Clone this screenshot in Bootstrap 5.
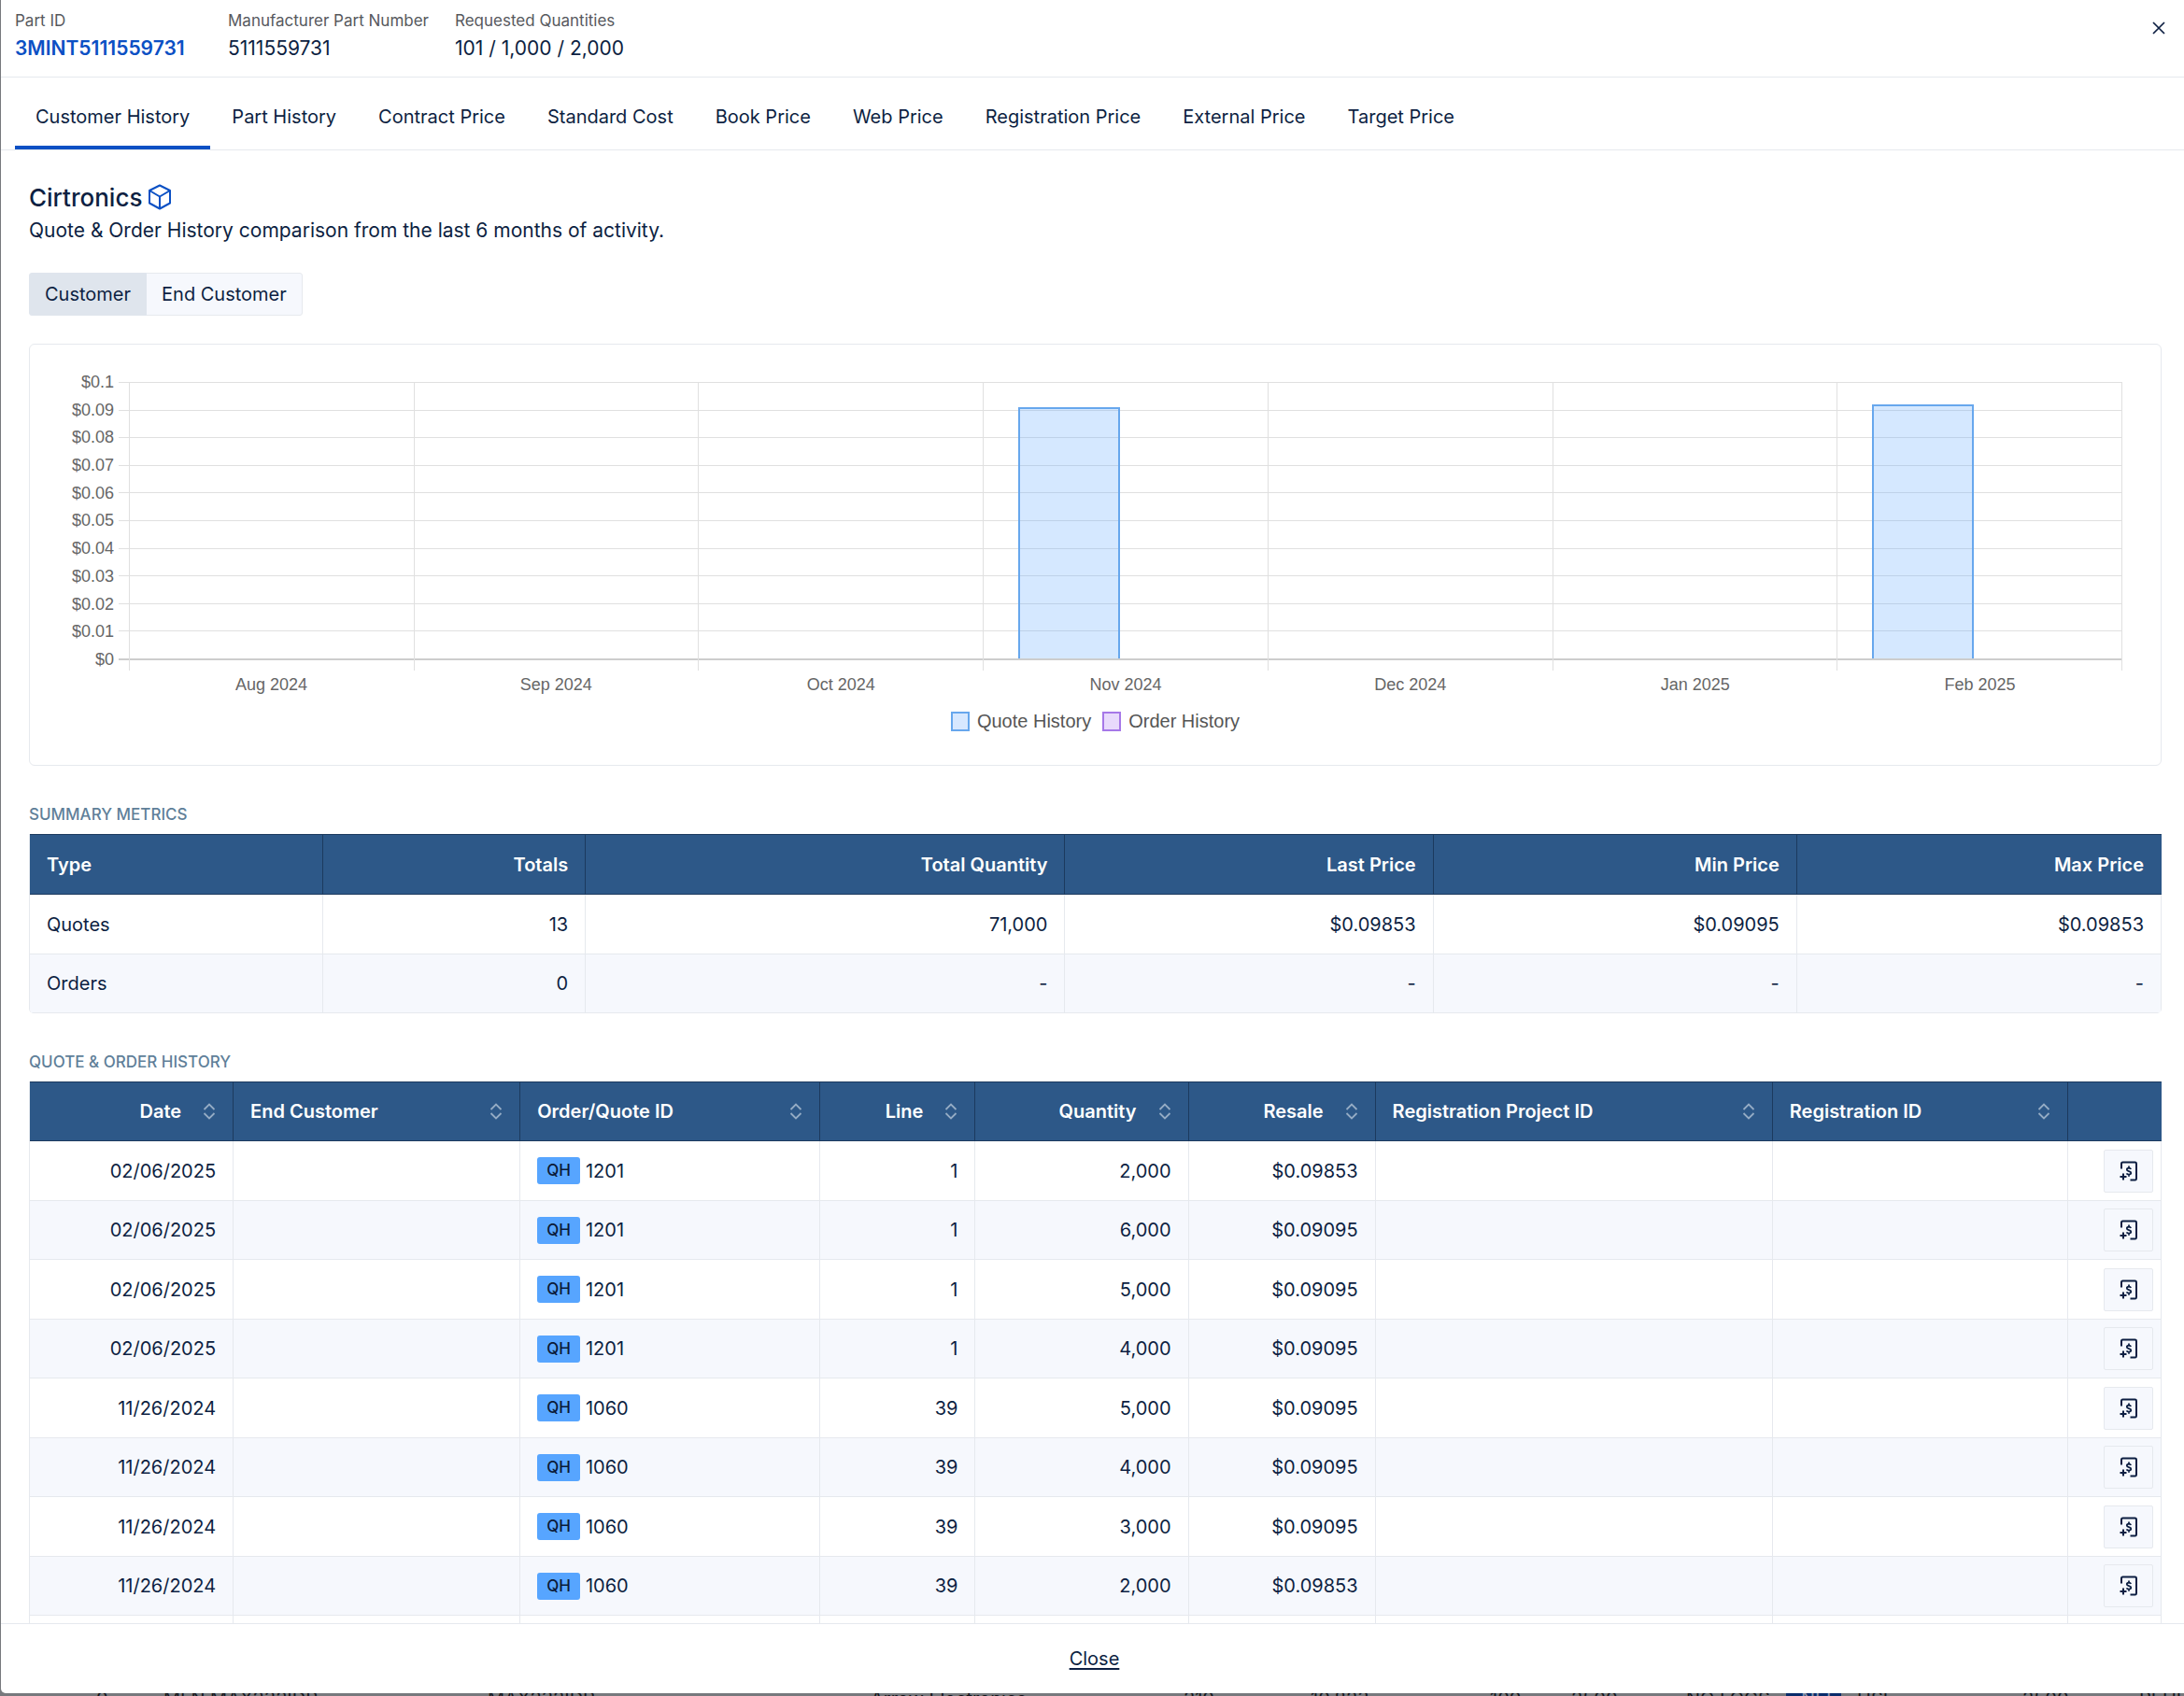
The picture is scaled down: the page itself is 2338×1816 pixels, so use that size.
<!DOCTYPE html>
<html lang="en">
<head>
<meta charset="utf-8">
<meta name="viewport" content="width=device-width, initial-scale=1">
<title>Part pricing history</title>
<link href="https://cdn.jsdelivr.net/npm/bootstrap@5.3.0/dist/css/bootstrap.min.css" rel="stylesheet">
<style>
:root { --ink: #0d1f42; --line: #e6e9ee; --accent: #0b50c4; --zebra: #f6f8fd; --head: #2d5888; --head-line: #1c3a5e; }
body { font-family: Inter, "Liberation Sans", sans-serif; font-size: 20px; line-height: 30px; color: var(--ink); background: #77797d; }
.dialog-shell { background: #fff; margin-left: 1px; border-bottom-left-radius: 5px; min-height: 0; }
.part-head { padding: 7px 15px 15px; gap: 28px; border-bottom: 1px solid var(--line); }
.part-head dl:first-child { min-width: 200px; }
.part-head dt { font-size: 17px; font-weight: 400; color: #57595e; }
.part-head dd { margin: 0; font-size: 21px; }
.part-head a { color: var(--accent); font-weight: 600; text-decoration: none; }
.x-btn { padding: 0; border: 0; background: none; width: 24px; height: 42px; color: var(--ink); }
.price-tabs { padding: 0 15px; gap: 1px; border-bottom: 1px solid var(--line); }
.price-tabs .nav-link { color: var(--ink); padding: 27px 22px 16px; border-bottom: 4px solid transparent; }
.price-tabs .nav-link.active { border-bottom-color: var(--accent); }
.history-body { padding: 32px 24px 0 30px; min-height: 0; overflow-y: auto; scrollbar-width: none; }
.history-body::-webkit-scrollbar { display: none; }
.cust-name { font-size: 26px; line-height: 38px; font-weight: 500; gap: 6px; margin: 0; }
.cust-name svg { margin-bottom: 2px; }
.cust-note { font-size: 21px; line-height: 31px; margin: 0; }
.scope-toggle { margin: 30px 0; }
.scope-toggle .btn { --bs-btn-color: var(--ink); --bs-btn-bg: var(--zebra); --bs-btn-border-color: var(--line); --bs-btn-active-bg: #dfe5ed; --bs-btn-active-color: var(--ink); --bs-btn-active-border-color: #dfe5ed; --bs-btn-border-radius: 3px; font-size: 20px; line-height: 30px; padding: 7px 16px; }
.chart-card { border: 1px solid var(--line); border-radius: 6px; padding: 30px 41px 31px 45px; font-family: "Liberation Sans", Arial, sans-serif; color: #666; margin-bottom: 34px; }
.y-axis { font-size: 18px; line-height: 20px; height: 317px; text-align: right; padding-right: 5px; }
.plot { display: grid; padding-top: 10px; }
.plot > div { grid-area: 1 / 1; }
.plot-rows { height: 298px; border-bottom: 2px solid #cdcdcd; }
.plot-rows div { border-top: 1px solid #e0e0e0; }
.plot-cols { margin-left: 11px; height: 309px; border-right: 1px solid #e0e0e0; }
.plot-cols .month { border-left: 1px solid #e0e0e0; padding-bottom: 13px; flex: 1 1 0; }
.bar { width: 36%; margin-left: 12%; background: rgba(87,165,255,.25); border: 2px solid #67a7ed; border-bottom: 0; }
.months { margin-left: 11px; font-size: 18px; line-height: 30px; text-align: center; }
.months span { flex: 1 1 0; }
.legend-row { font-size: 20px; line-height: 30px; gap: 12px; padding: 9px 4px 1px 0; color: #555; }
.swatch { width: 20px; height: 21px; border: 2px solid #67a7ed; background: #d7e8ff; }
.swatch.order-hist { border-color: #a678e8; background: #e8dafc; }
.caption-line { font-size: 17px; line-height: 36px; font-weight: 500; color: #5f7f99; margin: 0 0 3px; text-transform: uppercase; }
.grid-table { table-layout: fixed; width: 100%; border-collapse: separate; border-spacing: 0; border-left: 1px solid var(--line); border-bottom-left-radius: 5px; border-bottom-right-radius: 5px; overflow: hidden; margin-bottom: 34px; }
.grid-table th { background: var(--head); color: #fff; font-weight: 600; padding: 0 18px; height: 65px; border: solid var(--head-line); border-width: 1px 1px 1px 0; }
.grid-table th:last-child { border-right-color: var(--head); }
.grid-table td { padding: 0 18px; border: solid var(--line); border-width: 0 1px 1px 0; height: 63px; }
.grid-table tr:nth-child(odd) td { height: 64px; }
.grid-table tr:nth-child(even) td { background: var(--zebra); }
.history-grid th { height: 64px; }
.history-grid .sort { background: none; border: 0; color: inherit; font-weight: inherit; padding: 0; width: 100%; display: flex; align-items: center; justify-content: space-between; }
.history-grid .sort svg { color: #94abc4; }
.history-grid .num-col .sort { justify-content: flex-end; gap: 23px; }
.quote-tag { background: #57a5ff; color: #0b1a38; font-size: 17px; font-weight: 500; line-height: 21px; padding: 4px 10px; border-radius: 3px; margin-right: 6px; }
.grid-table .act { padding: 0 8px; }
.copy-btn { width: 53px; height: 46px; border: 1px solid var(--line); background: var(--zebra); padding: 0; color: var(--ink); border-radius: 2px; }
.dialog-foot { border-top: 1px solid var(--line); height: 79px; padding-left: 4px; }
.dialog-foot .btn { color: var(--ink); font-size: 20px; line-height: 30px; text-decoration: underline; padding: 0; text-underline-offset: 3px; text-decoration-thickness: 2px; }
.backdrop-strip { height: 3px; overflow: hidden; display: grid; grid-template-columns: 103fr 72fr 347fr 410fr 335fr 136fr 192fr 87fr 123fr 107fr 76fr 177fr 125fr 48fr; color: #14161c; white-space: nowrap; }
.backdrop-strip span { font-size: 20px; line-height: 20px; margin-top: -4px; height: 20px; min-width: 0; overflow: hidden; }
.backdrop-strip .tag-fill { background: #0a2c6b; color: #8b95aa; margin-right: 17px; padding-left: 16px; }
</style>
<script src="https://cdn.jsdelivr.net/npm/bootstrap@5.3.0/dist/js/bootstrap.bundle.min.js"></script>
</head>
<body class="vh-100 d-flex flex-column overflow-hidden">
<svg class="d-none">
  <symbol id="ic-sort" viewBox="0 0 14 18"><path d="M1.500 7 7 1.500 12.500 7M1.500 11 7 16.500 12.500 11" fill="none" stroke="currentColor" stroke-width="1.800"/></symbol>
  <symbol id="ic-copy" viewBox="0 0 20 22"><path d="M2 8.500V3Q2 1.500 3.500 1.500H16.500Q18 1.500 18 3V19Q18 20.500 16.500 20.500H11.500M.5 17H7.500M4 13.500V20.500" fill="none" stroke="currentColor" stroke-width="2"/><path d="M12.300 8.900Q11.600 7.700 10 7.700 7.800 7.800 7.800 9.300 7.800 10.600 10 11.100 12.300 11.600 12.300 13 12.200 14.600 10 14.600 8.100 14.600 7.500 13.300M10 5.500V7.700M10 14.600V16.800" fill="none" stroke="currentColor" stroke-width="1.800"/></symbol>
</svg>
<main class="dialog-shell d-flex flex-column flex-fill">
  <header class="part-head d-flex align-items-start">
    <dl class="mb-0"><dt>Part ID</dt><dd><a href="#">3MINT5111559731</a></dd></dl>
    <dl class="mb-0"><dt>Manufacturer Part Number</dt><dd>5111559731</dd></dl>
    <dl class="mb-0"><dt>Requested Quantities</dt><dd>101 / 1,000 / 2,000</dd></dl>
    <button type="button" class="x-btn ms-auto" aria-label="Close dialog"><svg width="14" height="14" viewBox="0 0 14 14"><path d="M1 1 13 13M13 1 1 13" stroke="currentColor" stroke-width="1.700"/></svg></button>
  </header>
  <nav class="price-tabs nav">
    <a class="nav-link active" href="#">Customer History</a><a class="nav-link" href="#">Part History</a><a class="nav-link" href="#">Contract Price</a><a class="nav-link" href="#">Standard Cost</a><a class="nav-link" href="#">Book Price</a><a class="nav-link" href="#">Web Price</a><a class="nav-link" href="#">Registration Price</a><a class="nav-link" href="#">External Price</a><a class="nav-link" href="#">Target Price</a>
  </nav>
  <section class="history-body flex-fill">
    <h1 class="cust-name d-flex align-items-center">Cirtronics
      <svg width="26" height="28" viewBox="0 0 26 28"><path d="M13 1.500 24 7V20.500L13 26.500 2 20.500V7ZM2 7 13 13.500 24 7M13 13.500V26.500" fill="none" stroke="#0b50c4" stroke-width="2" stroke-linejoin="round"/></svg>
    </h1>
    <p class="cust-note">Quote &amp; Order History comparison from the last 6 months of activity.</p>
    <div class="scope-toggle d-flex">
      <div class="btn-group"><button type="button" class="btn active">Customer</button><button type="button" class="btn">End Customer</button></div>
    </div>
    <div class="chart-card">
      <div class="d-flex">
        <div class="y-axis d-flex flex-column justify-content-between"><span>$0.1</span><span>$0.09</span><span>$0.08</span><span>$0.07</span><span>$0.06</span><span>$0.05</span><span>$0.04</span><span>$0.03</span><span>$0.02</span><span>$0.01</span><span>$0</span></div>
        <div class="flex-fill">
          <div class="plot">
            <div class="plot-rows d-flex flex-column"><div class="flex-fill"></div><div class="flex-fill"></div><div class="flex-fill"></div><div class="flex-fill"></div><div class="flex-fill"></div><div class="flex-fill"></div><div class="flex-fill"></div><div class="flex-fill"></div><div class="flex-fill"></div><div class="flex-fill"></div></div>
            <div class="plot-cols d-flex">
              <div class="month"></div><div class="month"></div><div class="month"></div>
              <div class="month d-flex align-items-end"><div class="bar" style="height:91%"></div></div>
              <div class="month"></div><div class="month"></div>
              <div class="month d-flex align-items-end"><div class="bar" style="height:92%"></div></div>
            </div>
          </div>
          <div class="months d-flex"><span>Aug 2024</span><span>Sep 2024</span><span>Oct 2024</span><span>Nov 2024</span><span>Dec 2024</span><span>Jan 2025</span><span>Feb 2025</span></div>
        </div>
      </div>
      <div class="legend-row d-flex justify-content-center">
        <span class="d-flex align-items-center gap-2"><i class="swatch"></i>Quote History</span>
        <span class="d-flex align-items-center gap-2"><i class="swatch order-hist"></i>Order History</span>
      </div>
    </div>
    <h2 class="caption-line">Summary Metrics</h2>
    <table class="grid-table summary-grid">
      <colgroup><col style="width:314px"><col style="width:281px"><col style="width:513px"><col style="width:394px"><col style="width:389px"><col style="width:390px"></colgroup>
      <thead><tr><th>Type</th><th class="text-end">Totals</th><th class="text-end">Total Quantity</th><th class="text-end">Last Price</th><th class="text-end">Min Price</th><th class="text-end">Max Price</th></tr></thead>
      <tbody>
        <tr><td>Quotes</td><td class="text-end">13</td><td class="text-end">71,000</td><td class="text-end">$0.09853</td><td class="text-end">$0.09095</td><td class="text-end">$0.09853</td></tr>
        <tr><td>Orders</td><td class="text-end">0</td><td class="text-end">-</td><td class="text-end">-</td><td class="text-end">-</td><td class="text-end">-</td></tr>
      </tbody>
    </table>
    <h2 class="caption-line">Quote &amp; Order History</h2>
    <table class="grid-table history-grid">
      <colgroup><col style="width:218px"><col style="width:307px"><col style="width:321px"><col style="width:166px"><col style="width:228px"><col style="width:200px"><col style="width:425px"><col style="width:316px"><col style="width:100px"></colgroup>
      <thead><tr id="heads"></tr></thead>
      <tbody id="lines"></tbody>
    </table>
  </section>
  <footer class="dialog-foot d-flex justify-content-center align-items-center"><button type="button" class="btn">Close</button></footer>
</main>
<div class="backdrop-strip" aria-hidden="true"><span></span><span>0</span><span>MLN MAX232IDR</span><span>MAX232IDR</span><span>Arrow Electronics</span><span>210</span><span>10,823</span><span>100</span><span>2500</span><span>NO LOGS</span><span class="tag-fill">NEI</span><span>USE</span><span>2500</span><span>REUL</span></div>
<script>
const heads = [["Date",1],["End Customer",0],["Order/Quote ID",0],["Line",1],["Quantity",1],["Resale",1],["Registration Project ID",0],["Registration ID",0]];
document.getElementById("heads").innerHTML = heads.map(([t, num]) =>
  `<th class="${num ? "num-col" : ""}"><button type="button" class="sort">${t}<svg width="14" height="18"><use href="#ic-sort"/></svg></button></th>`).join("") + "<th></th>";
const rows = [
  ["02/06/2025","1201","1","2,000","$0.09853"],["02/06/2025","1201","1","6,000","$0.09095"],
  ["02/06/2025","1201","1","5,000","$0.09095"],["02/06/2025","1201","1","4,000","$0.09095"],
  ["11/26/2024","1060","39","5,000","$0.09095"],["11/26/2024","1060","39","4,000","$0.09095"],
  ["11/26/2024","1060","39","3,000","$0.09095"],["11/26/2024","1060","39","2,000","$0.09853"]];
document.getElementById("lines").innerHTML = rows.map(([d, id, line, qty, price]) =>
  `<tr><td class="text-end">${d}</td><td></td><td><div class="d-flex align-items-center"><span class="quote-tag">QH</span>${id}</div></td><td class="text-end">${line}</td><td class="text-end">${qty}</td><td class="text-end">${price}</td><td></td><td></td><td class="act"><button type="button" class="copy-btn d-flex align-items-center justify-content-center ms-auto" aria-label="Use price"><svg width="20" height="22"><use href="#ic-copy"/></svg></button></td></tr>`).join("") + "<tr>" + "<td></td>".repeat(9) + "</tr>";
</script>
</body>
</html>
